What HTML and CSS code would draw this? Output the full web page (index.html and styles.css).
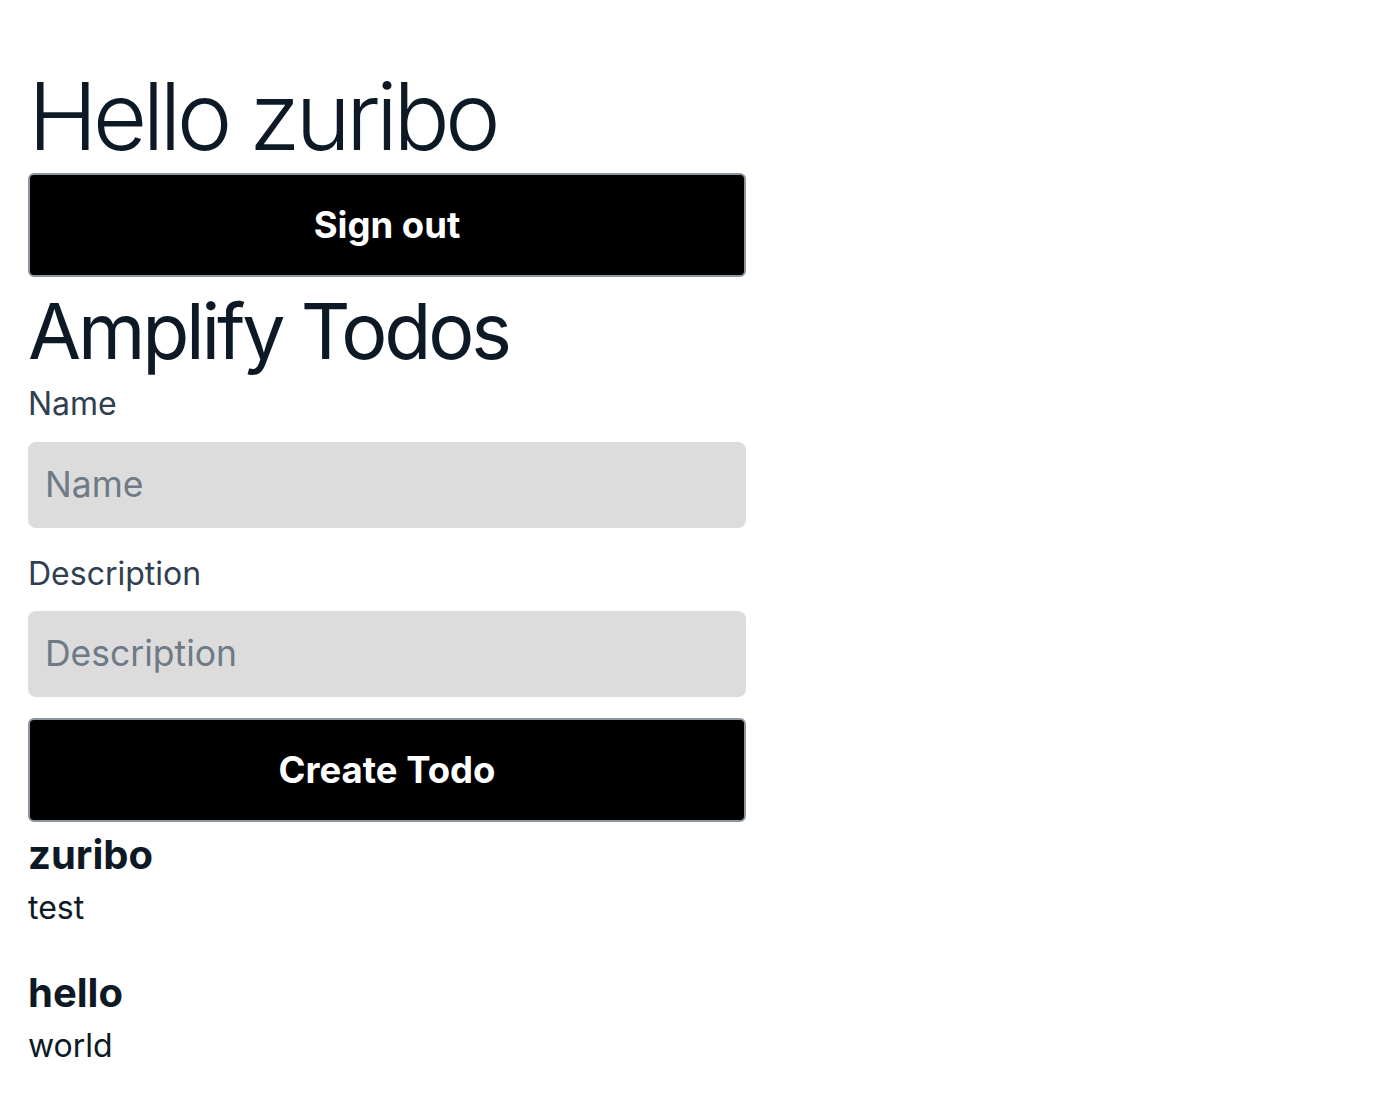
FILE: index.html
```html
<!DOCTYPE html>
<html lang="en">
<head>
    <meta charset="UTF-8">
    <meta name="viewport" content="width=device-width, initial-scale=1.0">
    <title>Amplify Todos</title>
    <link rel="stylesheet" href="styles.css">
</head>
<body>

<div class="app">
    <h1 class="greeting">Hello zuribo</h1>
    <button class="btn" type="button">Sign out</button>

    <h2 class="title">Amplify Todos</h2>
    <form class="todo-form" id="todo-form">
        <div class="field">
            <label for="name">Name</label>
            <input type="text" id="name" name="name" placeholder="Name">
        </div>
        <div class="field">
            <label for="description">Description</label>
            <input type="text" id="description" name="description" placeholder="Description">
        </div>
        <button class="btn" type="submit">Create Todo</button>
    </form>

    <div class="todos">
        <div class="todo">
            <h3>zuribo</h3>
            <p>test</p>
        </div>
        <div class="todo">
            <h3>hello</h3>
            <p>world</p>
        </div>
    </div>
</div>

</body>
</html>
```

FILE: styles.css
```css
body {
    margin: 0;
    font-family: Inter, "Noto Sans", sans-serif;
    color: #0d1a26;
    background: white;
}

.app {
    width: 718px;
    padding: 60px 28px 0;
}

.greeting {
    font-family: Inter, "Liberation Sans", sans-serif;
    font-weight: 300;
    font-size: 94px;
    letter-spacing: -4.8px;
    line-height: 1.2;
    margin: 0;
}

.btn {
    display: block;
    box-sizing: border-box;
    width: 100%;
    height: 104px;
    background: black;
    color: white;
    border: 2px solid #8c96a0;
    border-radius: 6px;
    font-family: Inter, sans-serif;
    font-size: 36.5px;
    font-weight: 700;
    cursor: pointer;
}

.title {
    font-size: 77px;
    font-weight: 400;
    letter-spacing: -3.2px;
    line-height: 1.2;
    margin: 8px 0 0;
}

.todo-form {
    display: flex;
    flex-direction: column;
    gap: 21px;
    margin-top: 8px;
}

.field {
    display: flex;
    flex-direction: column;
    gap: 18px;
}

.field + .field {
    margin-top: 6px;
}

.field label {
    font-size: 32px;
    color: #304050;
    line-height: 1.2;
}

.field input {
    height: 86px;
    box-sizing: border-box;
    border: none;
    border-radius: 8px;
    background: #dcdcdc;
    padding: 0 17px;
    font-family: Inter, sans-serif;
    font-size: 35.5px;
    color: #0d1a26;
}

.field input::placeholder {
    color: #6e7a86;
}

.todos {
    margin-top: 7px;
}

.todo {
    margin-bottom: 38px;
}

.todo h3 {
    font-size: 40px;
    font-weight: 700;
    margin: 0;
    line-height: 1.3;
}

.todo p {
    font-size: 32px;
    margin: 6px 0 0;
    line-height: 1.3;
}
```
